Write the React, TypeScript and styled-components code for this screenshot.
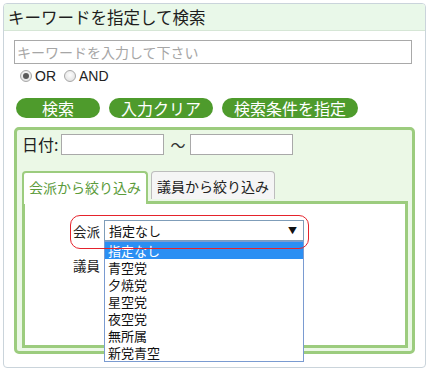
import React from 'react';
import styled, { createGlobalStyle } from 'styled-components';

const Global = createGlobalStyle`
  html, body { margin: 0; padding: 0; background: #fff; }
  body { font-family: "Noto Sans CJK JP", "Noto Sans", sans-serif; color: #222; }
  * { box-sizing: border-box; }
`;

const GREEN = '#9ccc7e';

const Panel = styled.div`
  margin: 3px 0 0 3px;
  width: 423px;
  height: 365px;
  border: 1px solid #cad4db;
  border-radius: 4px;
`;

const Header = styled.div`
  height: 27px;
  background: #e9f8e9;
  border-bottom: 1px solid #d6e6d6;
  border-radius: 3px 3px 0 0;
  padding-left: 4px;
  font-size: 16.5px;
  line-height: 26px;
  color: #1e1e1e;
`;

const Body = styled.div`
  padding: 9px 10px 0 10px;
`;

const KeywordInput = styled.input`
  display: block;
  width: 398px;
  height: 24px;
  border: 1px solid #a9a9a9;
  padding: 0 2px;
  font-family: inherit;
  font-size: 14px;
  outline: none;
  &::placeholder { color: #a6a6a6; }
`;

const RadioRow = styled.div`
  display: flex;
  align-items: center;
  height: 18px;
  margin-top: 3px;
  padding-left: 6px;
  font-family: "Liberation Sans", Arial, sans-serif;
  font-size: 14px;
  color: #222;
`;

const RadioItem = styled.label`
  display: flex;
  align-items: center;
  gap: 3px;
  margin-right: 8px;
`;

const RadioDot = styled.span<{ $checked?: boolean }>`
  width: 12px;
  height: 12px;
  border-radius: 50%;
  border: 1px solid #a8a8a8;
  background: radial-gradient(circle at 50% 40%, #fdfdfd, #dcdcdc);
  display: flex;
  align-items: center;
  justify-content: center;
  &::after {
    content: '';
    width: 6px;
    height: 6px;
    border-radius: 50%;
    background: ${(p) => (p.$checked ? '#5a5a5a' : 'transparent')};
  }
`;

const ButtonRow = styled.div`
  display: flex;
  gap: 9px;
  margin-top: 13px;
  padding-left: 2px;
`;

const PillButton = styled.button<{ $min?: number }>`
  height: 20px;
  min-width: ${(p) => p.$min ?? 0}px;
  padding: 0 12px;
  border: none;
  border-radius: 10px;
  background: #4e9b2c;
  color: #fff;
  font-family: inherit;
  font-size: 16px;
  line-height: 20px;
  cursor: pointer;
`;

const Fieldset = styled.div`
  margin-top: 9px;
  width: 401px;
  height: 227px;
  border: 3px solid ${GREEN};
  border-radius: 5px;
  background: #ebf8e6;
  padding: 4px 4px 3px 5px;
`;

const DateRow = styled.div`
  display: flex;
  align-items: center;
  height: 20px;
`;

const DateLabel = styled.span`
  font-size: 16px;
  margin-right: 3px;
  color: #222;
`;

const DateInput = styled.input`
  width: 103px;
  height: 21px;
  border: 1px solid #a9a9a9;
  background: #fff;
  outline: none;
`;

const Tilde = styled.span`
  font-size: 15px;
  margin: 0 5px 0 6px;
  color: #333;
`;

const TabBar = styled.div`
  display: flex;
  align-items: flex-start;
  gap: 3px;
  margin-top: 17px;
  height: 30px;
`;

const Tab = styled.div<{ $active?: boolean }>`
  position: relative;
  z-index: 1;
  height: ${(p) => (p.$active ? 33 : 28)}px;
  width: ${(p) => (p.$active ? 126 : 124)}px;
  border: ${(p) => (p.$active ? `2px solid ${GREEN}` : '1px solid #bdbdbd')};
  border-bottom: none;
  border-radius: 4px 4px 0 0;
  background: ${(p) => (p.$active ? '#fff' : '#f5f5f5')};
  color: ${(p) => (p.$active ? '#5b9b3b' : '#222')};
  font-size: 14px;
  line-height: 28px;
  text-align: center;
`;

const TabPanel = styled.div`
  width: 386px;
  height: 147px;
  border: 3px solid ${GREEN};
  background: #fff;
  padding: 16px 0 0 48px;
`;

const FieldRow = styled.div<{ $gap?: number }>`
  position: relative;
  display: flex;
  align-items: center;
  height: 21px;
  margin-top: ${(p) => p.$gap ?? 0}px;
`;

const FieldLabel = styled.span`
  width: 31px;
  font-size: 13.5px;
  color: #222;
`;

const SelectWrap = styled.div`
  position: relative;
  width: 200px;
  height: 21px;
`;

const SelectBox = styled.div`
  width: 100%;
  height: 100%;
  border: 1px solid #7f9db9;
  background: #fff;
  display: flex;
  align-items: center;
  justify-content: space-between;
  padding: 0 6px 0 4px;
  font-size: 13px;
  color: #111;
`;

const Arrow = styled.span`
  font-size: 9px;
  color: #111;
`;

const DropList = styled.ul`
  position: absolute;
  z-index: 2;
  left: 0;
  top: 100%;
  width: 100%;
  margin: 0;
  padding: 0;
  list-style: none;
  border: 1px solid #7a9bd1;
  background: #fff;
`;

const DropItem = styled.li<{ $selected?: boolean }>`
  height: 17px;
  line-height: 17px;
  padding-left: 3px;
  font-size: 13px;
  overflow: hidden;
  background: ${(p) => (p.$selected ? '#2b8ff3' : '#fff')};
  color: ${(p) => (p.$selected ? '#fff' : '#111')};
`;

const Highlight = styled.div`
  position: absolute;
  z-index: 3;
  left: -3px;
  top: -5px;
  width: 239px;
  height: 34px;
  border: 1px solid #e5232c;
  border-radius: 10px;
  pointer-events: none;
`;

const parties = ['指定なし', '青空党', '夕焼党', '星空党', '夜空党', '無所属', '新党青空'];

export default function App() {
  return (
    <>
      <Global />
      <Panel>
        <Header>キーワードを指定して検索</Header>
        <Body>
          <KeywordInput placeholder="キーワードを入力して下さい" />
          <RadioRow>
            <RadioItem>
              <RadioDot $checked />
              OR
            </RadioItem>
            <RadioItem>
              <RadioDot />
              AND
            </RadioItem>
          </RadioRow>
          <ButtonRow>
            <PillButton $min={84}>検索</PillButton>
            <PillButton>入力クリア</PillButton>
            <PillButton>検索条件を指定</PillButton>
          </ButtonRow>
          <Fieldset>
            <DateRow>
              <DateLabel>日付:</DateLabel>
              <DateInput />
              <Tilde>〜</Tilde>
              <DateInput />
            </DateRow>
            <TabBar>
              <Tab $active>会派から絞り込み</Tab>
              <Tab>議員から絞り込み</Tab>
            </TabBar>
            <TabPanel>
              <FieldRow>
                <Highlight />
                <FieldLabel>会派</FieldLabel>
                <SelectWrap>
                  <SelectBox>
                    <span>指定なし</span>
                    <Arrow>▼</Arrow>
                  </SelectBox>
                  <DropList>
                    {parties.map((p, i) => (
                      <DropItem key={p} $selected={i === 0}>
                        {p}
                      </DropItem>
                    ))}
                  </DropList>
                </SelectWrap>
              </FieldRow>
              <FieldRow $gap={13}>
                <FieldLabel>議員</FieldLabel>
                <SelectWrap>
                  <SelectBox />
                </SelectWrap>
              </FieldRow>
            </TabPanel>
          </Fieldset>
        </Body>
      </Panel>
    </>
  );
}
